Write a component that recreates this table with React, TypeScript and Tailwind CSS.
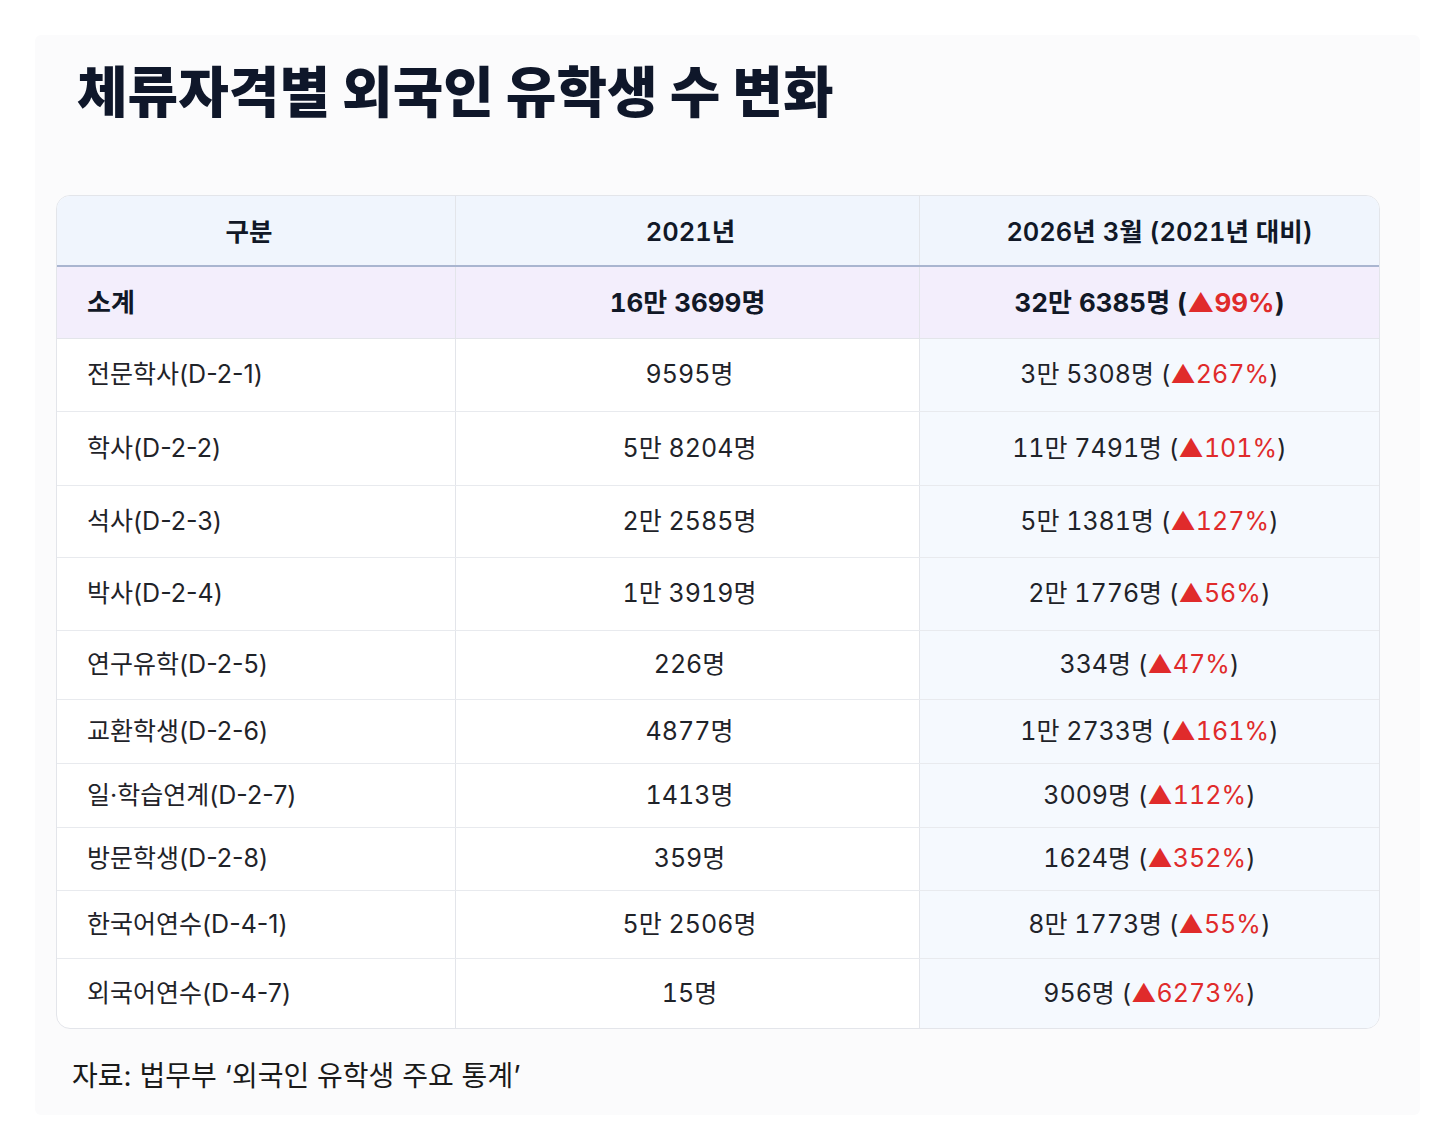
const FONT = "font-['Inter','Noto_Sans_CJK_KR',sans-serif]";

type Row = {
  label: string;
  y2021: string;
  y2026: string;
  pct: string;
  h: string;
};

const rows: Row[] = [
  { label: "전문학사(D-2-1)", y2021: "9595명", y2026: "3만 5308명", pct: "267%", h: "h-[73px]" },
  { label: "학사(D-2-2)", y2021: "5만 8204명", y2026: "11만 7491명", pct: "101%", h: "h-[74px]" },
  { label: "석사(D-2-3)", y2021: "2만 2585명", y2026: "5만 1381명", pct: "127%", h: "h-[72px]" },
  { label: "박사(D-2-4)", y2021: "1만 3919명", y2026: "2만 1776명", pct: "56%", h: "h-[73px]" },
  { label: "연구유학(D-2-5)", y2021: "226명", y2026: "334명", pct: "47%", h: "h-[69px]" },
  { label: "교환학생(D-2-6)", y2021: "4877명", y2026: "1만 2733명", pct: "161%", h: "h-[64px]" },
  { label: "일·학습연계(D-2-7)", y2021: "1413명", y2026: "3009명", pct: "112%", h: "h-[64px]" },
  { label: "방문학생(D-2-8)", y2021: "359명", y2026: "1624명", pct: "352%", h: "h-[63px]" },
  { label: "한국어연수(D-4-1)", y2021: "5만 2506명", y2026: "8만 1773명", pct: "55%", h: "h-[68px]" },
  { label: "외국어연수(D-4-7)", y2021: "15명", y2026: "956명", pct: "6273%", h: "h-[69px]" },
];

function Change({ value, pct }: { value: string; pct: string }) {
  return (
    <span>
      {value} (<span className="text-[#e02b2b]">▲{pct}</span>)
    </span>
  );
}

export default function App() {
  return (
    <div className={`min-h-screen bg-white pt-[35px] pl-[35px] pr-[24px] pb-[36px] ${FONT}`}>
      <div className="bg-[#fbfbfc] rounded-md pt-[25px] pl-[21px] pr-[40px] pb-[18px]">
        {/* Title */}
        <h1 className="pl-[21px] text-[55px] leading-[65px] font-extrabold text-[#0f172a]">
          체류자격별 외국인 유학생 수 변화
        </h1>

        {/* Table */}
        <div className="mt-[70px] border border-[#e3e5ea] rounded-[14px] overflow-hidden bg-white">
          {/* Header */}
          <div className="grid grid-cols-[399px_464px_1fr] h-[71px] bg-[#f0f5fd] border-b-2 border-[#a9b5d0] text-[25.5px] font-semibold text-[#111827] tabular-nums">
            <div className="flex items-center justify-center pt-[3px] pr-[14px] border-r border-[#e3e5ea]">구분</div>
            <div className="flex items-center justify-center pt-[3px] pl-[6px] border-r border-[#e3e5ea]">2021년</div>
            <div className="flex items-center justify-center pt-[3px] pl-[20px]">2026년 3월 (2021년 대비)</div>
          </div>

          {/* Subtotal */}
          <div className="grid grid-cols-[399px_464px_1fr] h-[72px] bg-[#f3eefc] border-b border-[#e3e5ea] text-[26px] font-bold text-[#111827]">
            <div className="flex items-center pl-[30px] border-r border-[#e3e5ea]">소계</div>
            <div className="flex items-center justify-center border-r border-[#e3e5ea] tabular-nums">16만 3699명</div>
            <div className="flex items-center justify-center tabular-nums">
              <Change value="32만 6385명" pct="99%" />
            </div>
          </div>

          {/* Body rows */}
          {rows.map((r, i) => (
            <div
              key={r.label}
              className={`grid grid-cols-[399px_464px_1fr] ${r.h} text-[25px] text-[#1f2329] ${
                i < rows.length - 1 ? "border-b border-[#e8eaee]" : ""
              }`}
            >
              <div className="flex items-center pl-[30px] border-r border-[#e3e5ea]">{r.label}</div>
              <div className="flex items-center justify-center pl-[4px] border-r border-[#e3e5ea] tabular-nums">{r.y2021}</div>
              <div className="flex items-center justify-center bg-[#f5f9fe] tabular-nums">
                <Change value={r.y2026} pct={r.pct} />
              </div>
            </div>
          ))}
        </div>

        {/* Source */}
        <p className="mt-[26px] pl-[16px] text-[28px] text-[#1a1a1a]">자료: 법무부 ‘외국인 유학생 주요 통계’</p>
      </div>
    </div>
  );
}
